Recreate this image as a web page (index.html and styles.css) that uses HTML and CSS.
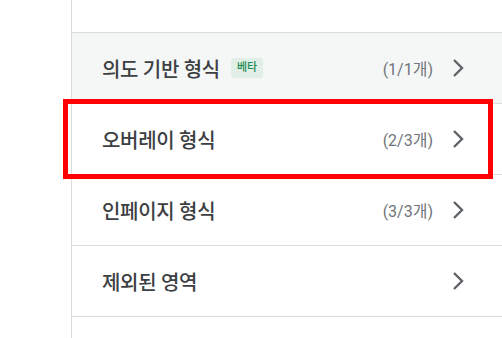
FILE: index.html
```html
<!DOCTYPE html>
<html lang="ko">
<head>
<meta charset="utf-8">
<link rel="stylesheet" href="styles.css">
</head>
<body>
<div class="panel">
  <div class="top"></div>
  <ul class="list">
    <li class="row row-muted">
      <span class="title">의도 기반 형식</span>
      <span class="badge">베타</span>
      <span class="count">(1/1개)</span>
      <svg class="chev" viewBox="0 0 12 20"><path d="M2 2 L10 10 L2 18" /></svg>
    </li>
    <li class="row row-focus">
      <span class="title">오버레이 형식</span>
      <span class="count">(2/3개)</span>
      <svg class="chev" viewBox="0 0 12 20"><path d="M2 2 L10 10 L2 18" /></svg>
      <span class="focus-ring"></span>
    </li>
    <li class="row">
      <span class="title">인페이지 형식</span>
      <span class="count">(3/3개)</span>
      <svg class="chev" viewBox="0 0 12 20"><path d="M2 2 L10 10 L2 18" /></svg>
    </li>
    <li class="row">
      <span class="title">제외된 영역</span>
      <span class="count"></span>
      <svg class="chev" viewBox="0 0 12 20"><path d="M2 2 L10 10 L2 18" /></svg>
    </li>
  </ul>
</div>
</body>
</html>
```
FILE: styles.css
```css
html, body {
  margin: 0;
  padding: 0;
  background: #ffffff;
}
body {
  font-family: Roboto, "Noto Sans CJK KR", sans-serif;
  width: 502px;
  height: 338px;
  overflow: hidden;
}
.panel {
  margin-left: 71px;
  border-left: 1px solid #dadce0;
  height: 338px;
}
.top {
  height: 32px;
  border-bottom: 1px solid #dadce0;
}
.list {
  list-style: none;
  margin: 0;
  padding: 0;
}
.row {
  position: relative;
  display: flex;
  align-items: center;
  height: 70px;
  padding-left: 30px;
  padding-right: 38px;
  border-bottom: 1px solid #dadce0;
}
.row-muted {
  background: #f5f7f7;
}
.title {
  font-size: 20px;
  font-weight: 500;
  color: #3c4043;
  letter-spacing: -0.3px;
}
.badge {
  margin-left: 11px;
  background: #e1efe6;
  color: #1e8a55;
  font-size: 11px;
  font-weight: 500;
  padding: 2px 6px;
  border-radius: 3px;
  line-height: 16px;
}
.count {
  margin-left: auto;
  font-size: 16px;
  color: #70757a;
  margin-right: 19px;
}
.chev {
  width: 12px;
  height: 20px;
  fill: none;
  stroke: #5f6368;
  stroke-width: 2.4;
}
.focus-ring {
  position: absolute;
  left: -9px;
  top: -5px;
  width: 420px;
  height: 70px;
  border: 5px solid #ff0000;
  pointer-events: none;
}
```
